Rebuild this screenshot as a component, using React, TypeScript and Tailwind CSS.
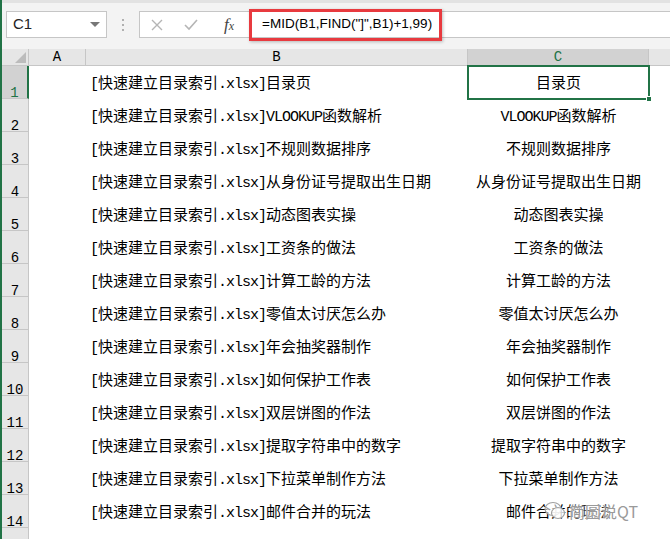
import React from "react";

const items = [
  "目录页",
  "VLOOKUP函数解析",
  "不规则数据排序",
  "从身份证号提取出生日期",
  "动态图表实操",
  "工资条的做法",
  "计算工龄的方法",
  "零值太讨厌怎么办",
  "年会抽奖器制作",
  "如何保护工作表",
  "双层饼图的作法",
  "提取字符串中的数字",
  "下拉菜单制作方法",
  "邮件合并的玩法",
];

const cellFont = { fontFamily: '"Liberation Mono", "Noto Sans CJK SC", monospace' };

function Mixed({ text }: { text: string }) {
  const parts = text.match(/[\x00-\x7f]+|[^\x00-\x7f]+/g) || [];
  return (
    <>
      {parts.map((p, i) =>
        /^[\x00-\x7f]+$/.test(p) ? (
          <span key={i} className="tracking-[-1px]">{p}</span>
        ) : (
          <span key={i}>{p}</span>
        )
      )}
    </>
  );
}

export default function App() {
  return (
    <div className="relative w-[670px] h-[539px] overflow-hidden bg-white border-l-2 border-[#217346]">
      {/* formula bar */}
      <div className="h-[49px] bg-[#f3f3f3] border-t-[3px] border-[#e2e2e2] flex items-start pt-[8px]">
        <div className="ml-[4px] w-[101px] h-[27px] bg-white border border-[#c6c6c6] flex items-center justify-between pl-[6px] pr-[6px]">
          <span className="text-[15px] text-[#222]" style={{ fontFamily: '"Liberation Sans", sans-serif' }}>C1</span>
          <svg width="10" height="6" viewBox="0 0 10 6"><path d="M0 0 L10 0 L5 5 Z" fill="#777" /></svg>
        </div>
        <div className="w-[32px] h-[27px] flex flex-col items-center justify-center gap-[3px]">
          <div className="w-[2px] h-[2px] bg-[#b0b0b0]" />
          <div className="w-[2px] h-[2px] bg-[#b0b0b0]" />
          <div className="w-[2px] h-[2px] bg-[#b0b0b0]" />
        </div>
        <div className="flex-1 h-[27px] bg-white border border-[#c6c6c6] border-r-0 flex items-center">
          <div className="w-[34px] flex justify-center">
            <svg width="12" height="12" viewBox="0 0 12 12"><path d="M1 1 L11 11 M11 1 L1 11" stroke="#b5b5b5" strokeWidth="1.4" /></svg>
          </div>
          <div className="w-[34px] flex justify-center">
            <svg width="14" height="12" viewBox="0 0 14 12"><path d="M1 6 L5 10 L13 1" stroke="#b5b5b5" strokeWidth="1.6" fill="none" /></svg>
          </div>
          <div className="w-[42px] flex justify-center items-baseline italic text-[#444] leading-none" style={{ fontFamily: '"Liberation Serif", serif' }}>
            <span className="text-[17px]">f</span><span className="text-[12px]">x</span>
          </div>
          <div className="relative h-[32px] flex items-center pl-[10px] pr-[7px] -ml-[1px] border-[3px] border-[#e83a3f] shadow-[1px_1px_3px_rgba(0,0,0,0.25)]">
            <span className="text-[13.5px] text-black" style={{ fontFamily: '"Liberation Sans", sans-serif' }}>=MID(B1,FIND("]",B1)+1,99)</span>
          </div>
        </div>
      </div>

      {/* grid */}
      <div className="grid grid-cols-[27px_57px_382px_181px_1fr]">
        {/* header row */}
        <div className="h-[17px] bg-[#e6e6e6] border-r border-b border-[#c6c6c6] flex items-end justify-end p-[2px]">
          <svg width="11" height="11" viewBox="0 0 11 11"><path d="M11 0 L11 11 L0 11 Z" fill="#bcbcbc" /></svg>
        </div>
        <div className="h-[17px] bg-[#e6e6e6] border-r border-b border-[#c6c6c6] flex items-center justify-center text-[14px] text-black leading-none" style={cellFont}>A</div>
        <div className="h-[17px] bg-[#e6e6e6] border-r border-b border-[#c6c6c6] flex items-center justify-center text-[14px] text-black leading-none" style={cellFont}>B</div>
        <div className="h-[17px] bg-[#d2d2d2] border-r border-b border-[#c6c6c6] flex items-center justify-center text-[14px] text-[#217346] leading-none" style={cellFont}>C</div>
        <div className="h-[17px] bg-[#e6e6e6] border-b border-[#c6c6c6]" />

        {items.map((t, i) => (
          <React.Fragment key={i}>
            <div
              className={
                i === 0
                  ? "h-[33px] bg-[#d2d2d2] border-r-2 border-r-[#217346] border-b border-b-[#c6c6c6] flex items-start justify-center pt-[20px] text-[14px] text-[#217346] leading-none"
                  : "h-[33px] bg-[#e6e6e6] border-r border-r-[#c6c6c6] border-b border-b-[#c6c6c6] flex items-start justify-center pt-[20px] text-[14px] text-black leading-none"
              }
              style={cellFont}
            >
              {i + 1}
            </div>
            <div className="h-[33px]" />
            <div className="h-[33px] flex items-center pt-[5px] pl-[4px] text-[15px] text-black whitespace-nowrap" style={cellFont}>
              <Mixed text={"[快速建立目录索引.xlsx]" + t} />
            </div>
            <div className={"h-[33px] flex items-center justify-center pt-[5px] text-[15px] text-black whitespace-nowrap " + (i === 0 ? "relative" : "")} style={cellFont}>
              <Mixed text={t} />
              {i === 0 && (
                <>
                  <div className="absolute -left-[1px] -top-[1px] -right-[1px] -bottom-[1px] border-2 border-[#217346]" />
                  <div className="absolute -right-[3px] -bottom-[3px] w-[6px] h-[6px] bg-[#217346] border border-white" />
                </>
              )}
            </div>
            <div className="h-[33px]" />
          </React.Fragment>
        ))}
        <div className="h-[33px] bg-[#e6e6e6] border-r border-[#c6c6c6]" />
        <div />
        <div />
        <div />
        <div />
      </div>

      {/* watermark */}
      <div className="absolute left-[542px] top-[499px] flex items-center gap-[3px]">
        <svg width="22" height="20" viewBox="0 0 22 20">
          <ellipse cx="9" cy="8" rx="8" ry="6.5" fill="rgba(255,255,255,0.6)" stroke="#a0a0a0" strokeWidth="1.2" />
          <ellipse cx="14" cy="12" rx="6.5" ry="5.5" fill="rgba(255,255,255,0.8)" stroke="#a0a0a0" strokeWidth="1.2" />
        </svg>
        <span className="text-[16px] text-[#9a9a9a]" style={{ fontFamily: '"Noto Sans CJK SC", sans-serif', textShadow: "0 0 2px #fff, 0 0 2px #fff" }}>简圆说QT</span>
      </div>
    </div>
  );
}
